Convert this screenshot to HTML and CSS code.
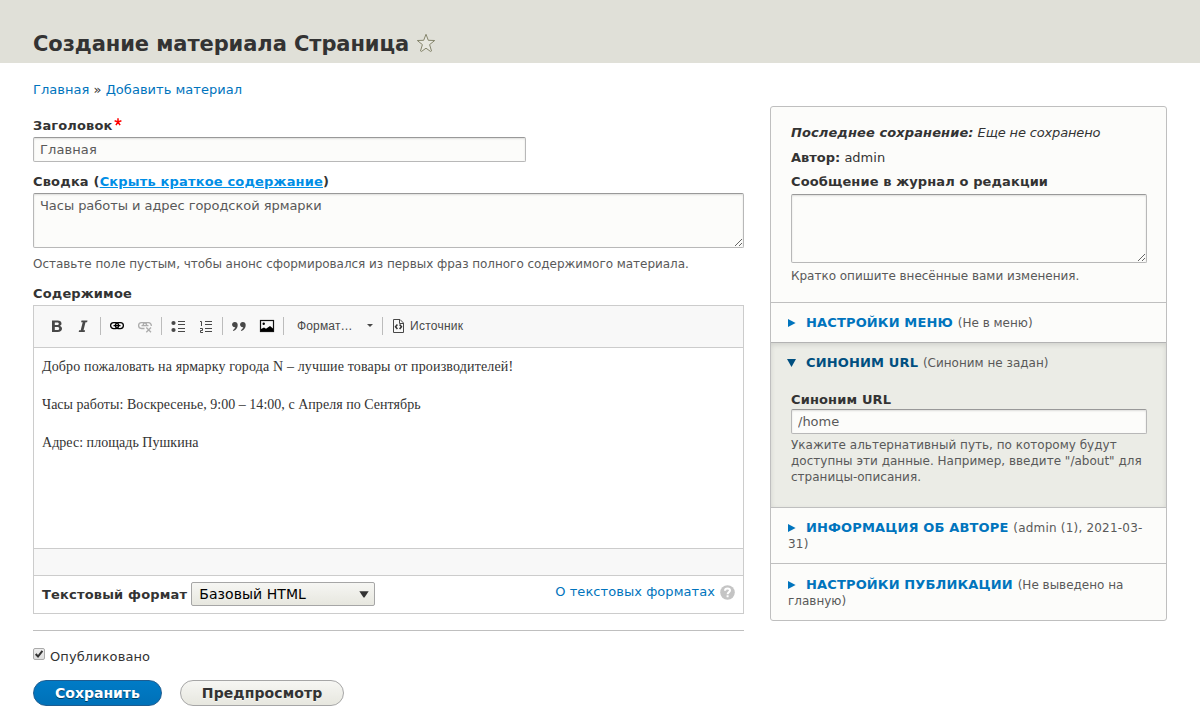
FILE: index.html
```html
<!DOCTYPE html>
<html lang="ru">
<head>
<meta charset="utf-8">
<title>Создание материала Страница</title>
<link rel="stylesheet" href="styles.css">
</head>
<body>
<header class="page-header">
  <h1 class="page-title">Создание материала Страница</h1>
  <svg class="star" width="20" height="20" viewBox="0 0 20 20"><path d="M10 1.3 12.3 7.3 18.7 7.5 13.6 11.6 15.5 18 14.6 18.5 10 15.2 5.4 18.5 4.500 18 6.400 11.600 1.300 7.500 7.700 7.300Z"/></svg>
</header>
<nav class="breadcrumb"><a href="#">Главная</a> » <a href="#">Добавить материал</a></nav>
<form class="layout">
  <main class="main">
    <label class="label label-title" for="title">Заголовок<svg class="required" width="8" height="8" viewBox="0 0 8 8"><path d="M4 .2V4M.6 2.800 4 4 7.400 2.800M1.900 7.200 4 4 6.100 7.200"/></svg></label>
    <input class="field title-field" id="title" type="text" value="Главная">
    <div class="label label-summary">Сводка (<a class="toggle" href="#">Скрыть краткое содержание</a>)</div>
    <textarea class="field summary-field">Часы работы и адрес городской ярмарки</textarea>
    <p class="description summary-help">Оставьте поле пустым, чтобы анонс сформировался из первых фраз полного содержимого материала.</p>
    <div class="label label-body">Содержимое</div>
    <section class="editor">
      <div class="toolbar">
        <span class="tool"><svg width="16" height="16" viewBox="0 0 16 16"><path class="dark" fill-rule="evenodd" d="M3 2.500H8.500C11 2.500 12.500 3.600 12.500 5.400 12.500 6.700 11.800 7.500 10.700 7.900 12.200 8.200 13 9.200 13 10.600 13 12.800 11.400 14 8.700 14H3ZM5.800 4.500V7.100H8C9.200 7.100 9.800 6.700 9.800 5.800 9.800 4.900 9.200 4.500 8 4.500ZM5.800 9V12H8.300C9.500 12 10.200 11.500 10.200 10.500 10.200 9.500 9.500 9 8.300 9Z"/></svg></span>
        <span class="tool"><svg width="16" height="16" viewBox="0 0 16 16"><path class="dark" d="M6.500 2.500H12.500L12.100 4.300H10.500L8.500 12.200H10.100L9.700 14H3.700L4.100 12.200H5.700L7.700 4.300H6.100Z"/></svg></span>
        <i class="sep"></i>
        <span class="tool"><svg width="16" height="16" viewBox="0 0 16 16"><g class="link-shape"><rect x="1.600" y="4.600" width="8" height="6" rx="3"/><rect x="6.400" y="4.600" width="8" height="6" rx="3"/><path d="M4.500 7.600H11.500"/></g></svg></span>
        <span class="tool"><svg class="muted" width="16" height="16" viewBox="0 0 16 16"><g class="link-shape"><path d="M7.500 10.500H4.500A2.900 2.900 0 0 1 4.500 4.700H7.300A2.700 2.700 0 0 1 9.600 7.500M6.200 7.500A2.700 2.700 0 0 1 8.700 4.700H11.500A2.900 2.900 0 0 1 14.300 8M4.500 7.600H11.500"/><path d="M9.300 9.500 14 14.200M14 9.500 9.300 14.200"/></g></svg></span>
        <i class="sep"></i>
        <span class="tool"><svg width="16" height="16" viewBox="0 0 16 16"><circle class="dark" cx="3.500" cy="5" r="2.100"/><circle class="dark" cx="3.500" cy="12" r="2.100"/><path class="rule" d="M8 3.500H15M8 6.500H15M8 10.500H15M8 13.500H15"/></svg></span>
        <span class="tool"><svg width="16" height="16" viewBox="0 0 16 16"><path class="rule" d="M7 3.500H14M7 6.500H14M7 10.500H14M7 13.500H14M2 3.500H3.500V8M2 10.500H4.500V12.500H2.500V14.500H5"/></svg></span>
        <i class="sep"></i>
        <span class="tool"><svg width="16" height="16" viewBox="0 0 16 16"><path class="dark" d="M3.900 4A2.600 2.600 0 1 0 4.300 9.100C3.900 10.600 3.100 11.500 1.900 12.300L2.500 13C5.300 11.800 6.700 9.600 6.700 6.900 6.700 5 5.500 4 3.900 4ZM11.900 4A2.600 2.600 0 1 0 12.300 9.100C11.900 10.600 11.100 11.500 9.900 12.300L10.500 13C13.300 11.800 14.700 9.600 14.700 6.900 14.700 5 13.500 4 11.900 4Z"/></svg></span>
        <span class="tool"><svg width="16" height="16" viewBox="0 0 16 16"><rect class="photo" x="1.500" y="2.500" width="13" height="11"/><circle cx="4.700" cy="5.700" r="1.200"/><path d="M2 13V11L5 9.500 7 10.800 11 8 14 10.500V13Z"/></svg></span>
        <i class="sep"></i>
        <span class="combo"><span>Формат…</span><i class="caret"></i></span>
        <i class="sep"></i>
        <span class="source"><svg width="16" height="16" viewBox="0 0 16 16"><path class="outline" d="M2.500 1.500H9L12.500 5V14.500H2.500ZM8.500 1.500V5.500H12.500"/><path class="chevrons" d="M6.400 6.500 4.500 8.800 6.400 11.100M8.600 6.500 10.500 8.800 8.600 11.100"/></svg>Источник</span>
      </div>
      <div class="content">
        <p class="intro">Добро пожаловать на ярмарку города N – лучшие товары от производителей!</p>
        <p>Часы работы: Воскресенье, 9:00 – 14:00, с Апреля по Сентябрь</p>
        <p>Адрес: площадь Пушкина</p>
      </div>
      <div class="status"></div>
      <div class="format">
        <span class="label format-label">Текстовый формат</span>
        <span class="select"><span>Базовый HTML</span><svg width="10" height="7" viewBox="0 0 10 7"><path d="M.3 .3H9.700L5.500 6.500H4.500Z"/></svg></span>
        <a class="format-help" href="#">О текстовых форматах<svg width="15" height="15" viewBox="0 0 15 15"><circle cx="7.500" cy="7.500" r="7.300"/><path d="M5 5.800C5 4.500 6 3.600 7.500 3.600S10 4.400 10 5.600C10 7.100 7.600 7.200 7.600 9.200M7.600 10.300V12.200"/></svg></a>
      </div>
    </section>
    <div class="published"><span class="check"><svg width="12" height="12" viewBox="0 0 12 12"><path d="M2.700 6 5 8.500 9.400 2.800"/></svg></span><span>Опубликовано</span></div>
    <div class="actions"><button class="button primary" type="button">Сохранить</button><button class="button preview" type="button">Предпросмотр</button></div>
  </main>
  <aside class="side">
    <section class="meta">
      <p class="meta-row saved"><b>Последнее сохранение:</b> Еще не сохранено</p>
      <p class="meta-row"><b>Автор:</b> admin</p>
      <div class="label log-label">Сообщение в журнал о редакции</div>
      <textarea class="field log-field"></textarea>
      <p class="description">Кратко опишите внесённые вами изменения.</p>
    </section>
    <section class="panel"><div class="summary"><i class="arrow"></i><b>Настройки меню</b> <span>(Не в меню)</span></div></section>
    <section class="panel open">
      <div class="summary"><i class="arrow down"></i><b>Синоним URL</b> <span>(Синоним не задан)</span></div>
      <div class="alias">
        <label class="label alias-label" for="alias">Синоним URL</label>
        <input class="field alias-field" id="alias" type="text" value="/home">
        <p class="description">Укажите альтернативный путь, по которому будут доступны эти данные. Например, введите "/about" для страницы-описания.</p>
      </div>
    </section>
    <section class="panel"><div class="summary"><i class="arrow"></i><b>Информация об авторе</b> <span class="author">(admin (1), 2021-03-31)</span></div></section>
    <section class="panel last"><div class="summary"><i class="arrow"></i><b>Настройки публикации</b> <span>(Не выведено на главную)</span></div></section>
  </aside>
</form>
</body>
</html>
```
FILE: styles.css
```css
* { box-sizing: border-box; }
body { margin: 0; height: 706px; overflow: hidden; background: #fff; color: #333; font: 13px/20px "DejaVu Sans", sans-serif; }
a { color: #0074bd; text-decoration: none; }
p { margin: 0; }
.page-header { height: 63px; padding: 24px 33px 0; display: flex; align-items: flex-start; background: #e0e0d8; }
.page-title { margin: 0; font-size: 21px; line-height: 40px; letter-spacing: -.08px; white-space: nowrap; }
.star { margin: 9px 0 0 7px; fill: #e8e8e0; stroke: #85856c; stroke-width: 1; }
.breadcrumb { height: 43px; padding: 17px 33px 0; letter-spacing: .03px; }
.layout { display: flex; align-items: flex-start; gap: 26px; padding: 0 33px; }
.main { width: 711px; padding-top: 10px; display: flex; flex-direction: column; align-items: flex-start; }
.label { display: block; font-weight: bold; letter-spacing: .14px; white-space: nowrap; }
.label-title { height: 21px; display: flex; }
.required { margin: 2px 0 0 2px; fill: none; stroke: #f00; stroke-width: 1.5; }
.field { display: block; margin: 0; padding: 2px 6px; border: 1px solid #b8b8b8; border-top-color: #999; border-radius: 2px; background: #fcfcfa; color: #595959; font: 13px/19px "DejaVu Sans", sans-serif; box-shadow: inset 0 1px 2px rgba(0,0,0,.125); outline: 0; }
.title-field { width: 493px; height: 25px; letter-spacing: .1px; }
.label-summary { margin-top: 10px; height: 21px; letter-spacing: .17px; }
.toggle { color: #008ee6; text-decoration: underline; }
.summary-field { width: 711px; height: 55px; letter-spacing: -.05px; }
.description { color: #595959; font-size: 12px; line-height: 16px; letter-spacing: -.02px; }
.summary-help { margin-top: 8px; letter-spacing: -.035px; white-space: nowrap; }
.alias .description { letter-spacing: .01px; }
.label-body { margin-top: 12px; height: 21px; }
.editor { width: 711px; height: 309px; border: 1px solid #ccc; }
.toolbar { height: 42px; display: flex; align-items: center; padding: 0 0 2px 9px; background: #f8f8f8; border-bottom: 1px solid #ccc; color: #484848; font: 12px/16px "Liberation Sans", Arial, sans-serif; }
.tool { width: 27px; height: 16px; padding-left: 5px; display: flex; }
.tool:first-child { padding-left: 6px; }
.sep + .tool { padding-left: 4px; }
.tool svg { flex: none; }
.tool:has(+ .sep) { width: 24px; }
.dark { fill: #484848; }
.rule { fill: none; stroke: #484848; stroke-width: 1; }
.link-shape { fill: none; stroke: #000; stroke-width: 1.3; }
.muted { opacity: .3; }
.photo { fill: none; stroke: #111; stroke-width: 1.2; }
.sep { width: 1px; height: 18px; margin: 0 4px 0 6px; background: #bcbcbc; }
.sep ~ .tool + .tool + .sep { margin-left: 5px; }
.combo { width: 88px; padding: 0 3px 0 9px; display: flex; justify-content: space-between; align-items: center; letter-spacing: .16px; }
.caret { border: 3px solid transparent; border-top-color: #484848; border-bottom: 0; }
.source { display: flex; gap: 3px; padding-left: 4px; letter-spacing: .26px; }
.outline { fill: none; stroke: #484848; }
.chevrons { fill: none; stroke: #333; stroke-width: 1.5; }
.content { height: 200px; padding: 9px 8px; font: 14px/19px "Liberation Serif", "Times New Roman", serif; letter-spacing: .03px; }
.content p { margin-bottom: 19px; }
.content .intro { letter-spacing: .145px; }
.status { height: 28px; border: 1px solid #ccc; border-width: 1px 0; background: #f8f8f8; }
.format { height: 37px; display: flex; align-items: flex-start; padding: 6px 8px 0 8px; }
.format-label { margin: 3px 4px 0 0; letter-spacing: .18px; }
.select { width: 184px; height: 24px; padding: 0 5px 0 7px; display: flex; align-items: center; justify-content: space-between; border: 1px solid #a6a6a6; border-radius: 2px; background: linear-gradient(#f6f6f3, #e7e7df); color: #000; font-size: 14px; letter-spacing: .05px; white-space: nowrap; }
.select svg { fill: #333; }
.format-help { margin-left: auto; display: flex; align-items: center; gap: 5px; letter-spacing: .06px; white-space: nowrap; }
.format-help circle { fill: #c4c4c4; }
.format-help path { fill: none; stroke: #fff; stroke-width: 2; }
.published { width: 100%; margin-top: 16px; padding-top: 16px; height: 50px; display: flex; gap: 5px; border-top: 1px solid #bfbfbf; letter-spacing: .08px; }
.check { width: 12px; height: 12px; margin-top: 1px; display: flex; border: 1px solid #aaa; border-radius: 2px; background: linear-gradient(#eee, #ddd); }
.check svg { flex: none; margin: -1px; fill: none; stroke: #333; stroke-width: 2; }
.actions { display: flex; gap: 18px; }
.button { height: 26px; padding: 0 21px; border: 1px solid #a6a6a6; border-radius: 13px; background: linear-gradient(#f6f6f3, #e7e7df); color: #333; font: bold 14px/22px "DejaVu Sans", sans-serif; text-shadow: 0 1px rgba(255,255,255,.6); }
.preview { letter-spacing: .09px; }
.primary { border-color: #1e5c90; background: linear-gradient(#007bc6, #0071b8); color: #fff; text-shadow: 0 1px rgba(0,0,0,.5); }
.side { width: 397px; height: 515px; border: 1px solid #bfbfbf; border-radius: 3px; background: #fcfcfa; }
.meta { height: 195px; padding: 16px 19px 0 20px; }
.meta-row { height: 25px; }
.saved { letter-spacing: -.15px; font-style: italic; }
.saved b { letter-spacing: .1px; }
.log-label { height: 22px; margin-top: -1px; letter-spacing: .11px; }
.log-field { width: 356px; height: 69px; margin-bottom: 5px; }
.panel { border-top: 1px solid #bfbfbf; }
.summary { padding: 12px 17px; color: #595959; font-size: 12px; line-height: 16px; height: 39px; }
.summary b { margin-right: 1px; color: #0074bd; font-size: 13px; letter-spacing: .15px; text-transform: uppercase; }
.author { letter-spacing: .2px; }
.arrow { display: inline-block; width: 8px; height: 8px; margin-right: 10px; background: #0074bd; clip-path: polygon(0 0, 95% 50%, 0 100%); }
.down { width: 9px; margin: 0 10px 0 -1px; background: #004f80; clip-path: polygon(0 0, 100% 0, 50% 100%); }
.open { height: 165px; background: #ebece6; box-shadow: inset 0 2px 5px rgba(0,0,0,.11); border-top-color: #b3b3b3; }
.open .summary b { color: #004f80; }
.alias { padding: 8px 19px 0 20px; }
.alias-label { height: 19px; }
.alias-field { width: 356px; height: 25px; margin-bottom: 3px; }
.open + .panel { height: 56px; }
.last .summary { padding-top: 13px; }
```
